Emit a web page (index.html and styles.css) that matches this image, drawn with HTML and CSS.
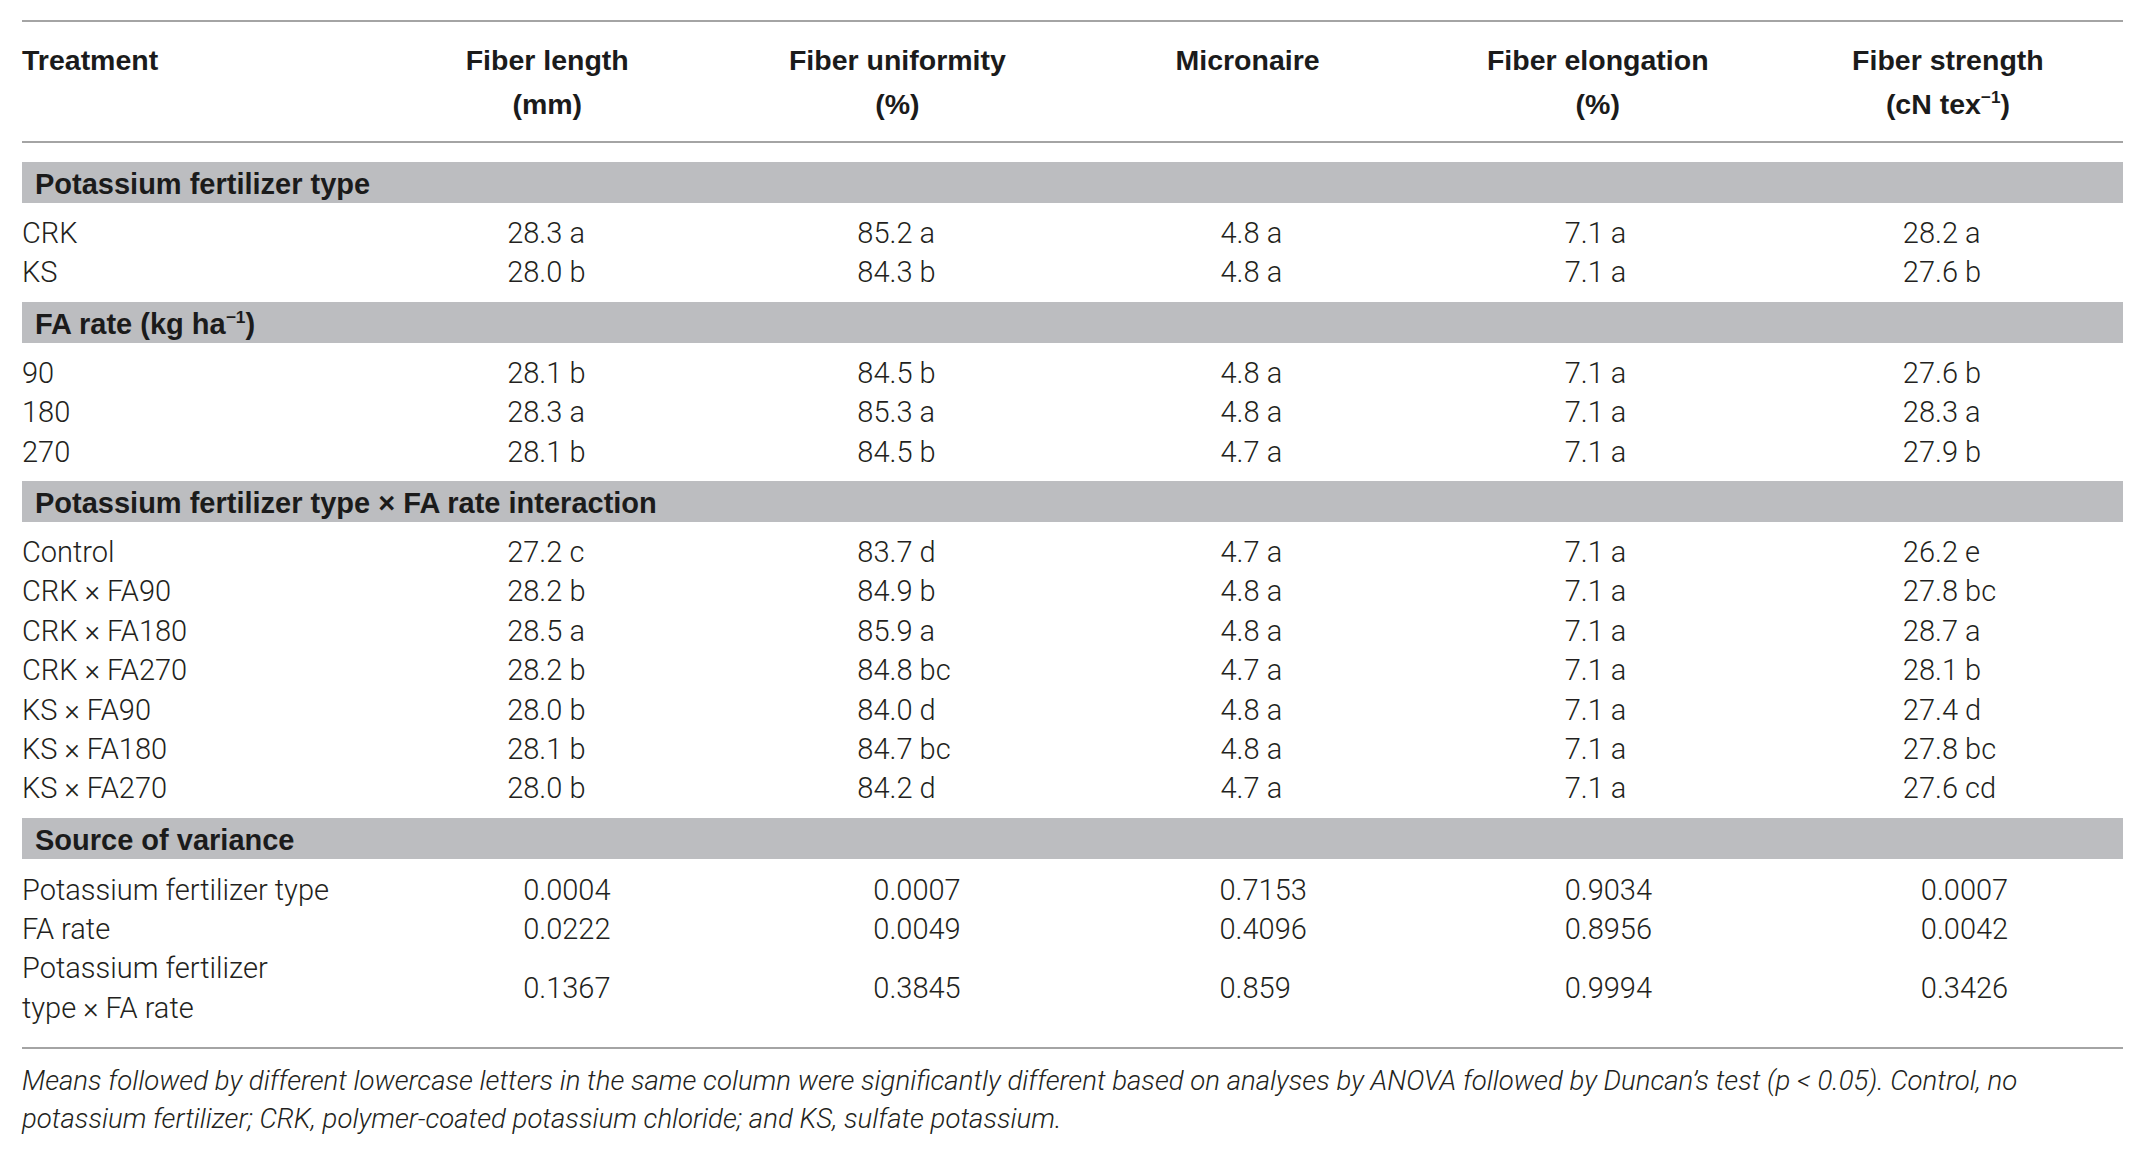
FILE: index.html
```html
<!DOCTYPE html>
<html lang="en">
<head>
<meta charset="utf-8">
<title>Fiber quality table</title>
<link rel="stylesheet" href="styles.css">
</head>
<body>
<div class="table">
  <div class="head">
    <div class="th th-left">Treatment</div>
    <div class="th">Fiber length<br>(mm)</div>
    <div class="th">Fiber uniformity<br>(%)</div>
    <div class="th">Micronaire</div>
    <div class="th">Fiber elongation<br>(%)</div>
    <div class="th">Fiber strength<br>(cN tex<sup class="sup">−1</sup>)</div>
  </div>

  <div class="band">Potassium fertilizer type</div>
  <div class="group">
    <div class="row"><div>CRK</div><div>28.3 a</div><div>85.2 a</div><div>4.8 a</div><div>7.1 a</div><div>28.2 a</div></div>
    <div class="row"><div>KS</div><div>28.0 b</div><div>84.3 b</div><div>4.8 a</div><div>7.1 a</div><div>27.6 b</div></div>
  </div>

  <div class="band">FA rate (kg ha<sup class="sup">−1</sup>)</div>
  <div class="group">
    <div class="row"><div>90</div><div>28.1 b</div><div>84.5 b</div><div>4.8 a</div><div>7.1 a</div><div>27.6 b</div></div>
    <div class="row"><div>180</div><div>28.3 a</div><div>85.3 a</div><div>4.8 a</div><div>7.1 a</div><div>28.3 a</div></div>
    <div class="row"><div>270</div><div>28.1 b</div><div>84.5 b</div><div>4.7 a</div><div>7.1 a</div><div>27.9 b</div></div>
  </div>

  <div class="band">Potassium fertilizer type × FA rate interaction</div>
  <div class="group">
    <div class="row"><div>Control</div><div>27.2 c</div><div>83.7 d</div><div>4.7 a</div><div>7.1 a</div><div>26.2 e</div></div>
    <div class="row"><div>CRK × FA90</div><div>28.2 b</div><div>84.9 b</div><div>4.8 a</div><div>7.1 a</div><div>27.8 bc</div></div>
    <div class="row"><div>CRK × FA180</div><div>28.5 a</div><div>85.9 a</div><div>4.8 a</div><div>7.1 a</div><div>28.7 a</div></div>
    <div class="row"><div>CRK × FA270</div><div>28.2 b</div><div>84.8 bc</div><div>4.7 a</div><div>7.1 a</div><div>28.1 b</div></div>
    <div class="row"><div>KS × FA90</div><div>28.0 b</div><div>84.0 d</div><div>4.8 a</div><div>7.1 a</div><div>27.4 d</div></div>
    <div class="row"><div>KS × FA180</div><div>28.1 b</div><div>84.7 bc</div><div>4.8 a</div><div>7.1 a</div><div>27.8 bc</div></div>
    <div class="row"><div>KS × FA270</div><div>28.0 b</div><div>84.2 d</div><div>4.7 a</div><div>7.1 a</div><div>27.6 cd</div></div>
  </div>

  <div class="band">Source of variance</div>
  <div class="group group-last">
    <div class="row pv"><div>Potassium fertilizer type</div><div>0.0004</div><div>0.0007</div><div>0.7153</div><div>0.9034</div><div>0.0007</div></div>
    <div class="row pv"><div>FA rate</div><div>0.0222</div><div>0.0049</div><div>0.4096</div><div>0.8956</div><div>0.0042</div></div>
    <div class="row pv row-tall"><div>Potassium fertilizer<br>type × FA rate</div><div>0.1367</div><div>0.3845</div><div>0.859</div><div>0.9994</div><div>0.3426</div></div>
  </div>
</div>
<p class="note">Means followed by different lowercase letters in the same column were significantly different based on analyses by ANOVA followed by Duncan’s test (p &lt; 0.05). Control, no<br>potassium fertilizer; CRK, polymer-coated potassium chloride; and KS, sulfate potassium.</p>
</body>
</html>
```

FILE: styles.css
```css
body {
  margin: 0;
  background: #ffffff;
  color: #231f20;
}

.table {
  margin: 20px 0 0 22px;
  width: 2101px;
  border-top: 2px solid #a4a4a4;
  border-bottom: 2px solid #a4a4a4;
  font-family: Roboto, "Liberation Sans", sans-serif;
}

.head {
  display: grid;
  grid-template-columns: repeat(6, 1fr);
  padding: 16px 0 15px;
  margin-bottom: 19px;
  border-bottom: 2px solid #a4a4a4;
  font-family: "Liberation Sans", Arial, sans-serif;
  font-weight: 700;
  font-size: 28.5px;
  line-height: 44px;
  color: #1b1b1b;
}

.th {
  text-align: center;
  white-space: nowrap;
}

.th-left {
  text-align: left;
}

.sup {
  font-size: 0.6em;
  line-height: 0;
  vertical-align: 0.62em;
}

.band {
  height: 41px;
  box-sizing: border-box;
  padding: 4px 0 0 13px;
  line-height: 37px;
  background: #bcbdc0;
  font-family: "Liberation Sans", Arial, sans-serif;
  font-weight: 700;
  font-size: 29px;
  color: #1b1b1b;
  white-space: nowrap;
}

.group {
  padding: 11px 0 9px;
}

.group-last {
  padding-top: 12px;
  padding-bottom: 19px;
}

.row {
  display: grid;
  grid-template-columns: repeat(6, 1fr);
  align-items: center;
  height: 39.4px;
  line-height: 39.4px;
  font-size: 29px;
  font-weight: 300;
  white-space: nowrap;
}

.row-tall {
  height: 78.8px;
}

.row > :nth-child(2) { padding-left: 135px; }
.row > :nth-child(3) { padding-left: 135px; }
.row > :nth-child(4) { padding-left: 148px; }
.row > :nth-child(5) { padding-left: 142px; }
.row > :nth-child(6) { padding-left: 130px; }

.pv > :nth-child(2) { padding-left: 151px; }
.pv > :nth-child(3) { padding-left: 151px; }
.pv > :nth-child(4) { padding-left: 147px; }
.pv > :nth-child(5) { padding-left: 142px; }
.pv > :nth-child(6) { padding-left: 148px; }

.note {
  margin: 0 0 0 22px;
  padding-top: 13px;
  font-family: Roboto, "Liberation Sans", sans-serif;
  font-style: italic;
  font-weight: 300;
  font-size: 27.6px;
  line-height: 38px;
  color: #231f20;
  white-space: nowrap;
}
```
